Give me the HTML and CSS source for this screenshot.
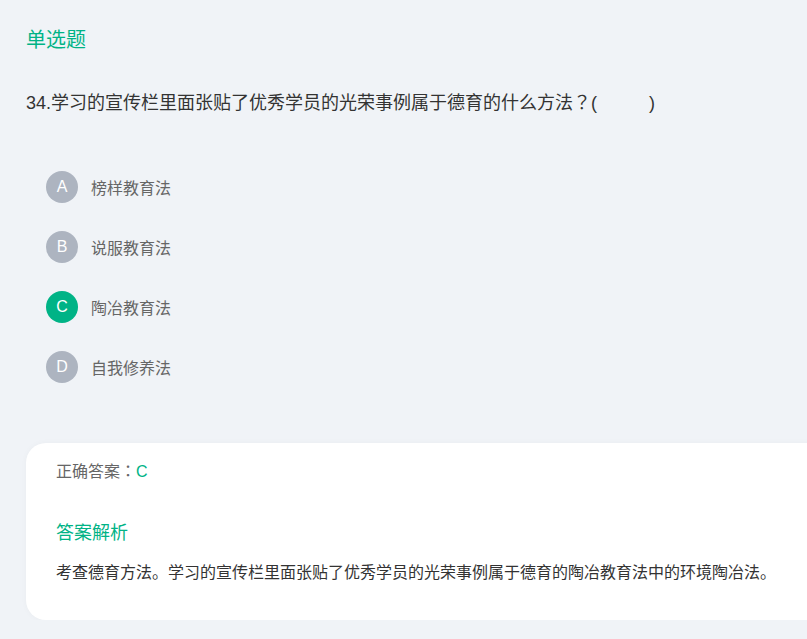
FILE: index.html
```html
<!DOCTYPE html>
<html lang="zh-CN">
<head>
<meta charset="utf-8">
<title>单选题</title>
<link rel="stylesheet" href="styles.css">
</head>
<body>
<div class="page">
  <div class="type">单选题</div>
  <div class="question">34.学习的宣传栏里面张贴了优秀学员的光荣事例属于德育的什么方法<span class="punct" lang="ja">？</span>(<span class="blank"></span>)</div>
  <ul class="options">
    <li class="option"><span class="letter">A</span><span class="label">榜样教育法</span></li>
    <li class="option"><span class="letter">B</span><span class="label">说服教育法</span></li>
    <li class="option correct"><span class="letter">C</span><span class="label">陶冶教育法</span></li>
    <li class="option"><span class="letter">D</span><span class="label">自我修养法</span></li>
  </ul>
  <div class="card">
    <div class="answer">正确答案<span class="punct" lang="ja">：</span><span class="green">C</span></div>
    <div class="analysis-title">答案解析</div>
    <div class="analysis">考查德育方法。学习的宣传栏里面张贴了优秀学员的光荣事例属于德育的陶冶教育法中的环境陶冶法。</div>
  </div>
</div>
</body>
</html>
```
FILE: styles.css
```css
html, body {
  margin: 0;
  padding: 0;
  background: #f0f3f7;
  font-family: "Liberation Sans", "Noto Sans CJK SC", sans-serif;
  overflow: hidden;
}
.page {
  padding: 28px 0 0 26px;
}
.type {
  font-size: 20px;
  line-height: 24px;
  color: #00b386;
}
.question {
  margin-top: 38px;
  font-size: 18px;
  line-height: 26px;
  height: 26px;
  color: #333;
}
.punct {
  font-family: "Noto Sans CJK JP", sans-serif;
  line-height: 1;
}
.blank {
  display: inline-block;
  width: 52px;
}
.options {
  list-style: none;
  margin: 55px 0 0 0;
  padding: 0 0 0 20px;
  display: flex;
  flex-direction: column;
  gap: 28px;
}
.option {
  display: flex;
  align-items: center;
  height: 32px;
}
.letter {
  width: 32px;
  height: 32px;
  border-radius: 50%;
  background: #adb4c0;
  color: #fff;
  font-size: 16px;
  display: flex;
  align-items: center;
  justify-content: center;
}
.correct .letter {
  background: #00b386;
}
.label {
  margin-left: 13px;
  font-size: 16px;
  color: #666;
}
.card {
  margin-top: 60px;
  margin-right: -30px;
  background: #fff;
  border-radius: 20px;
  box-shadow: 0 0 6px rgba(0, 0, 0, 0.03);
  padding: 17px 30px 38px 30px;
  height: 122px;
}
.answer {
  font-size: 16px;
  line-height: 24px;
  height: 24px;
  color: #666;
}
.green {
  color: #00b386;
}
.analysis-title {
  margin-top: 37px;
  font-size: 18px;
  line-height: 24px;
  color: #00b386;
}
.analysis {
  margin-top: 16px;
  font-size: 16px;
  line-height: 24px;
  color: #333;
}
```
